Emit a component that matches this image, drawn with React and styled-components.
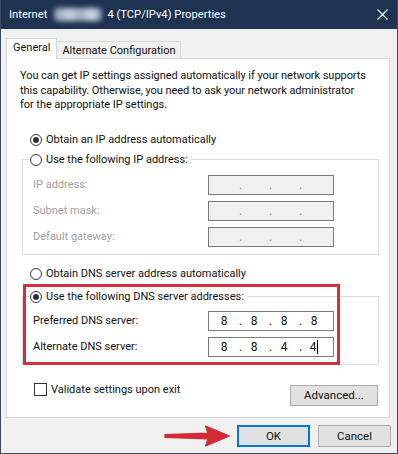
import React from 'react'
import styled, { createGlobalStyle } from 'styled-components'

const GlobalStyle = createGlobalStyle`
  html, body {
    margin: 0;
    padding: 0;
    background: #f0f0f0;
  }
`

const Window = styled.div`
  position: relative;
  box-sizing: border-box;
  width: 398px;
  height: 454px;
  display: flex;
  flex-direction: column;
  background: #f0f0f0;
  border: 1px solid #3d4b5e;
  border-top: none;
  font-family: Roboto, 'Liberation Sans', sans-serif;
  font-size: 11px;
  color: #111;
`

const TitleBar = styled.div`
  height: 29px;
  display: flex;
  align-items: center;
  justify-content: space-between;
  padding: 0 9px 0 8px;
  background: #1e3352;
  color: #fff;
  font-size: 11.2px;
`

const TitleText = styled.div`
  display: flex;
  align-items: center;
  white-space: nowrap;
`

const Blurred = styled.span`
  display: inline-block;
  width: 48px;
  height: 13px;
  margin: 0 5px 0 7px;
  border-radius: 4px;
  background: linear-gradient(90deg, #8e9db3 0%, #c9d2df 30%, #9fb0c6 55%, #d3dbe6 80%, #7d8ea8 100%);
  filter: blur(2.5px);
`

const CloseIcon = () => (
  <svg width="11" height="11" viewBox="0 0 11 11">
    <path d="M0.5 0.5 L10.5 10.5 M10.5 0.5 L0.5 10.5" stroke="#fff" strokeWidth="1.1" />
  </svg>
)

const Body = styled.div`
  padding: 9px 7px 0 5px;
`

const TabStrip = styled.div`
  display: flex;
  align-items: flex-end;
  height: 20px;
`

const Tab = styled.div`
  position: relative;
  z-index: 1;
  box-sizing: border-box;
  height: ${(p) => (p.$active ? '21px' : '17px')};
  margin-bottom: ${(p) => (p.$active ? '-1px' : '0')};
  padding: ${(p) => (p.$active ? '0 6px 3px 6px' : '0 4px 0 5px')};
  display: flex;
  align-items: center;
  border: 1px solid #d9d9d9;
  border-bottom: none;
  border-left: ${(p) => (p.$active ? '1px solid #d9d9d9' : 'none')};
  background: ${(p) => (p.$active ? '#fff' : '#f0f0f0')};
  font-size: 11px;
  white-space: nowrap;
`

const Panel = styled.div`
  box-sizing: border-box;
  height: 360px;
  display: flex;
  flex-direction: column;
  background: #fff;
  border: 1px solid #d9d9d9;
`

const Intro = styled.p`
  margin: 10px 0 0 13px;
  line-height: 14.5px;
  letter-spacing: -0.05px;
  white-space: nowrap;
`

const RadioRow = styled.div`
  display: flex;
  align-items: center;
  gap: 4px;
  height: 16px;
  margin: ${(p) => p.$margin || '0'};
  white-space: nowrap;
`

const RadioCircle = styled.span`
  box-sizing: border-box;
  width: 12px;
  height: 12px;
  border: 1px solid #333;
  border-radius: 50%;
  display: flex;
  align-items: center;
  justify-content: center;
  background: #fff;

  &::after {
    content: '';
    display: ${(p) => (p.$checked ? 'block' : 'none')};
    width: 6px;
    height: 6px;
    border-radius: 50%;
    background: #333;
  }
`

const Group = styled.fieldset`
  margin: ${(p) => p.$margin} 10px 0 15px;
  padding: 0 10px 7px 7px;
  border: 1px solid #dcdcdc;
  min-width: 0;
`

const Legend = styled.legend`
  padding: 0 3px 0 0;
`

const FieldRow = styled.div`
  display: flex;
  align-items: center;
  height: 20px;
  padding-left: 3px;
  margin-top: ${(p) => p.$first || '6px'};
`

const FieldLabel = styled.span`
  width: 175px;
  color: ${(p) => (p.$disabled ? '#a0a0a0' : '#111')};
`

const IpBox = styled.div`
  box-sizing: border-box;
  width: 126px;
  height: 20px;
  display: flex;
  align-items: center;
  padding-left: 5px;
  border: 1px solid #7a7a7a;
  background: ${(p) => (p.$disabled ? '#f0f0f0' : '#fff')};
  color: ${(p) => (p.$disabled ? '#909090' : '#111')};
  font-size: 12px;
`

const Octet = styled.span`
  width: 20px;
  display: flex;
  justify-content: center;
  align-items: center;
`

const Dot = styled.span`
  box-sizing: border-box;
  width: 10px;
  padding-left: 5px;
`

const Caret = styled.span`
  display: inline-block;
  width: 1px;
  height: 14px;
  margin-left: 1px;
  background: #000;
`

const BottomRow = styled.div`
  display: flex;
  justify-content: space-between;
  align-items: flex-start;
  margin: 18px 11px 0 27px;
`

const CheckRow = styled.label`
  display: flex;
  align-items: center;
  gap: 4px;
  height: 13px;
  white-space: nowrap;
`

const CheckBox = styled.span`
  box-sizing: border-box;
  width: 13px;
  height: 13px;
  border: 1px solid #333;
  background: #fff;
`

const Button = styled.div`
  box-sizing: border-box;
  width: ${(p) => p.$width || '73px'};
  height: ${(p) => p.$height || '22px'};
  margin-top: ${(p) => p.$mt || '0'};
  display: flex;
  align-items: center;
  justify-content: center;
  background: #e1e1e1;
  border: ${(p) => (p.$primary ? '2px solid #0078d7' : '1px solid #adadad')};
  font-size: 11.5px;
`

const Footer = styled.div`
  position: relative;
  display: flex;
  justify-content: flex-end;
  gap: 8px;
  padding: 7px 6px 0 0;
`

const Arrow = styled.svg`
  position: absolute;
  left: 160px;
  top: 0;
`

const Highlight = styled.div`
  position: absolute;
  left: 22px;
  top: 284px;
  width: 317px;
  height: 81px;
  box-sizing: border-box;
  border: 3px solid #d4303c;
  pointer-events: none;
`

const IpField = ({ values, disabled, caret }) => (
  <IpBox $disabled={disabled}>
    {values.map((v, i) => (
      <React.Fragment key={i}>
        {i > 0 && <Dot>.</Dot>}
        <Octet>
          {v}
          {caret && i === values.length - 1 && <Caret />}
        </Octet>
      </React.Fragment>
    ))}
  </IpBox>
)

const blank = ['', '', '', '']

export default function App() {
  return (
    <>
      <GlobalStyle />
      <Window>
        <TitleBar>
          <TitleText>
            Internet<Blurred />4 (TCP/IPv4) Properties
          </TitleText>
          <CloseIcon />
        </TitleBar>

        <Body>
          <TabStrip>
            <Tab $active>General</Tab>
            <Tab>Alternate Configuration</Tab>
          </TabStrip>

          <Panel>
            <Intro>
              You can get IP settings assigned automatically if your network supports
              <br />
              this capability. Otherwise, you need to ask your network administrator
              <br />
              for the appropriate IP settings.
            </Intro>

            <RadioRow $margin="19px 0 0 23px">
              <RadioCircle $checked />
              Obtain an IP address automatically
            </RadioRow>

            <Group $margin="4px">
              <Legend>
                <RadioRow>
                  <RadioCircle />
                  Use the following IP address:
                </RadioRow>
              </Legend>
              <FieldRow $first="7px">
                <FieldLabel $disabled>IP address:</FieldLabel>
                <IpField values={blank} disabled />
              </FieldRow>
              <FieldRow>
                <FieldLabel $disabled>Subnet mask:</FieldLabel>
                <IpField values={blank} disabled />
              </FieldRow>
              <FieldRow>
                <FieldLabel $disabled>Default gateway:</FieldLabel>
                <IpField values={blank} disabled />
              </FieldRow>
            </Group>

            <RadioRow $margin="11px 0 0 23px">
              <RadioCircle />
              Obtain DNS server address automatically
            </RadioRow>

            <Group $margin="7px">
              <Legend>
                <RadioRow>
                  <RadioCircle $checked />
                  Use the following DNS server addresses:
                </RadioRow>
              </Legend>
              <FieldRow $first="6px">
                <FieldLabel>Preferred DNS server:</FieldLabel>
                <IpField values={['8', '8', '8', '8']} />
              </FieldRow>
              <FieldRow>
                <FieldLabel>Alternate DNS server:</FieldLabel>
                <IpField values={['8', '8', '4', '4']} caret />
              </FieldRow>
            </Group>

            <BottomRow>
              <CheckRow>
                <CheckBox />
                Validate settings upon exit
              </CheckRow>
              <Button $width="88px" $height="21px" $mt="2px">
                Advanced...
              </Button>
            </BottomRow>
          </Panel>
        </Body>

        <Footer>
          <Arrow width="72" height="30" viewBox="160 418 72 30">
            <path
              d="M164 434.6 L207 433.2 L204.5 426 L228.5 436 L204.5 446 L207 438.8 L164 437.4 Z"
              fill="#d42a35"
              stroke="#d42a35"
              strokeWidth="1.2"
              strokeLinejoin="round"
            />
          </Arrow>
          <Button $primary>OK</Button>
          <Button>Cancel</Button>
        </Footer>

        <Highlight />
      </Window>
    </>
  )
}
